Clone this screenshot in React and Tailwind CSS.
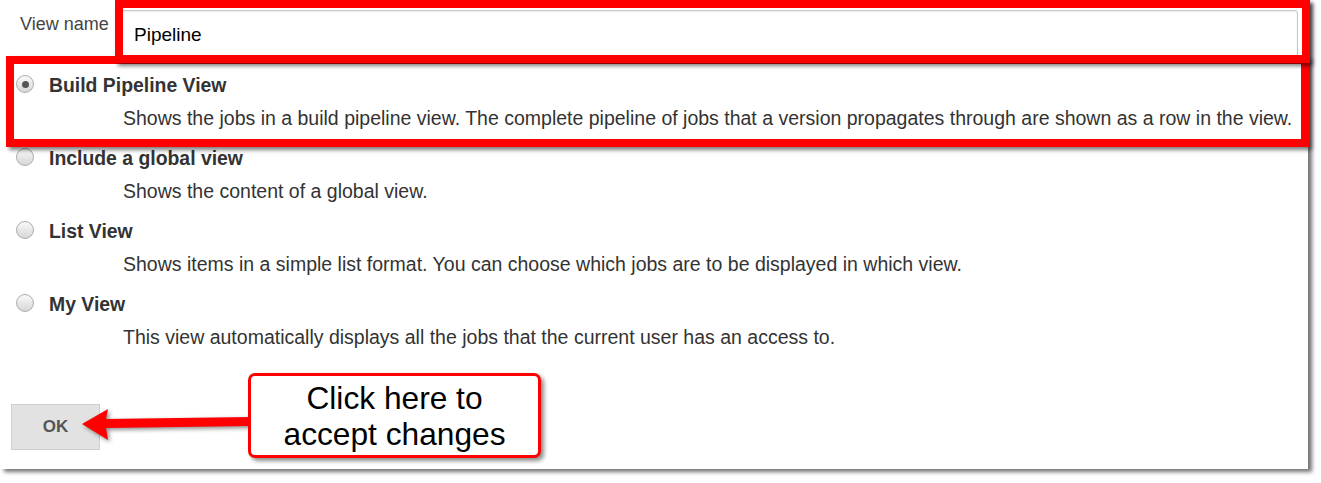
import React from 'react'

const views = [
  {
    title: 'Build Pipeline View',
    desc: 'Shows the jobs in a build pipeline view. The complete pipeline of jobs that a version propagates through are shown as a row in the view.',
    checked: true,
  },
  { title: 'Include a global view', desc: 'Shows the content of a global view.' },
  { title: 'List View', desc: 'Shows items in a simple list format. You can choose which jobs are to be displayed in which view.' },
  { title: 'My View', desc: 'This view automatically displays all the jobs that the current user has an access to.' },
]

function Radio({ checked }) {
  return (
    <span className="flex h-[18px] w-[18px] shrink-0 items-center justify-center rounded-full border border-[#adadad] bg-gradient-to-b from-[#fafafa] to-[#d6d6d6]">
      {checked && <span className="h-[7px] w-[7px] rounded-full bg-[#555]" />}
    </span>
  )
}

export default function App() {
  return (
    <div className="min-h-screen bg-white font-['Liberation_Sans',Arial,sans-serif]">
      <div className="relative h-[469px] w-[1308px] bg-white text-[#333] shadow-[4px_3px_4px_rgba(0,0,0,0.55)]">
        {/* view name */}
        <div className="flex h-[69px] items-start pt-[10px]">
          <div className="w-[120px] pl-[20px] pt-[3px] text-[18px] leading-[22px] text-[#444]">View name</div>
          <div className="flex h-[50px] w-[1178px] items-center rounded-[3px] border border-[#c8c8c8] pl-[13px] text-[19px] text-black shadow-[inset_0_1px_2px_rgba(0,0,0,0.08)]">
            Pipeline
          </div>
        </div>

        {/* view types */}
        <div className="flex flex-col">
          {views.map((v) => (
            <div key={v.title} className="mb-[7px] flex flex-col">
              <div className="flex h-[33px] items-center">
                <div className="flex w-[49px] justify-start pl-[16px] pb-[3px]">
                  <Radio checked={v.checked} />
                </div>
                <span className="text-[19.4px] font-bold">{v.title}</span>
              </div>
              <div className="h-[33px] pl-[123px] text-[19.5px] leading-[33px] whitespace-nowrap">{v.desc}</div>
            </div>
          ))}
        </div>

        <div className="mt-[43px] pl-[11px]">
          <button className="flex h-[46px] w-[89px] items-center justify-center border border-[#cfcfcf] bg-[#e2e2e2] text-[17px] font-bold text-[#555]">
            OK
          </button>
        </div>

        {/* annotations */}
        <div className="absolute left-[6px] top-[56px] h-[91px] w-[1303px] border-[8px] border-[#ff0000] shadow-[3px_3px_4px_rgba(0,0,0,0.5)]" />
        <div className="absolute left-[115px] top-0 h-[63px] w-[1195px] border-[8px] border-[#ff0000] shadow-[3px_3px_4px_rgba(0,0,0,0.5)]" />

        <svg className="absolute left-0 top-[400px] drop-shadow-[2px_2px_2px_rgba(0,0,0,0.45)]" width="260" height="50" viewBox="0 400 260 50">
          <polygon points="82,424 108,409 106,419 250,417 250,426 106,428 108,440" fill="#ff0000" />
        </svg>

        <div className="absolute left-[248px] top-[373px] flex h-[85px] w-[293px] flex-col items-center justify-center rounded-[7px] border-[3px] border-[#ff0000] bg-white text-[31.7px] leading-[36px] text-black shadow-[3px_3px_4px_rgba(0,0,0,0.45)]">
          <span>Click here to</span>
          <span>accept changes</span>
        </div>
      </div>
    </div>
  )
}
